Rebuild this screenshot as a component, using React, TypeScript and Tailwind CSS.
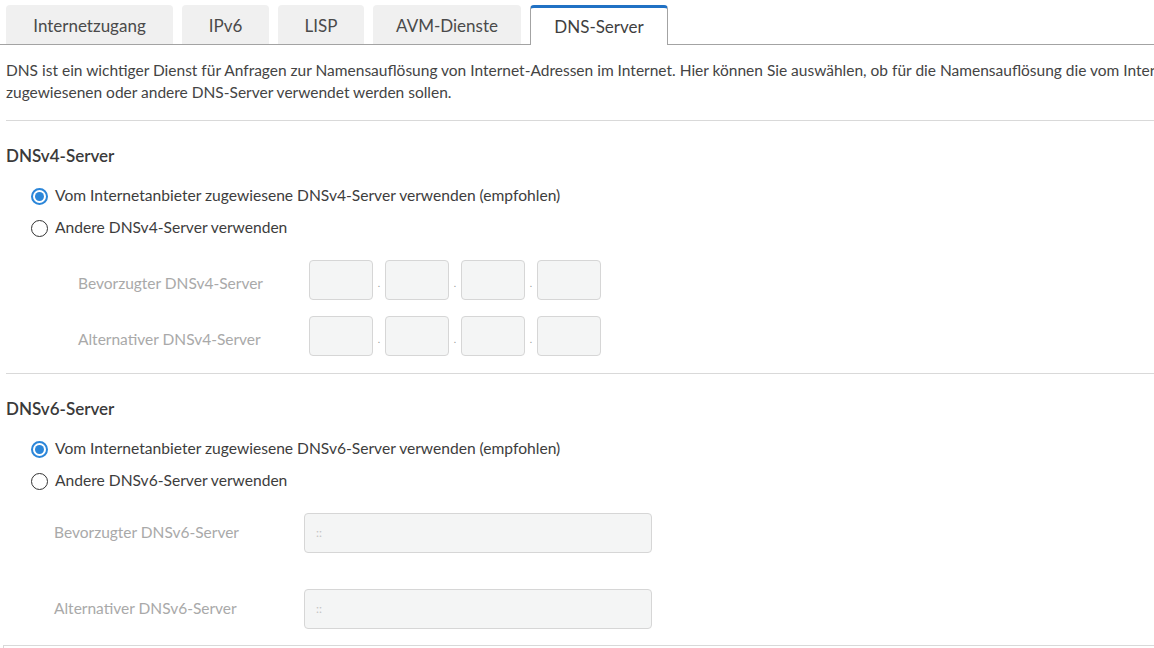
import React from "react"

const font = { fontFamily: "'Source Sans Pro', Lato, 'Liberation Sans', sans-serif" }

const tabs = [
    { label: "Internetzugang", width: "w-[167px]", active: false },
    { label: "IPv6", width: "w-[87px]", active: false },
    { label: "LISP", width: "w-[86px]", active: false },
    { label: "AVM-Dienste", width: "w-[148px]", active: false },
    { label: "DNS-Server", width: "w-[138px]", active: true },
]

function Radio({ checked, label }: { checked: boolean; label: string }) {
    return (
        <label className="flex items-center gap-[7px] h-[32px] pl-[31px]">
            {checked ? (
                <span className="w-[17px] h-[17px] rounded-full border-2 border-[#2b86d9] flex items-center justify-center">
                    <span className="w-[9px] h-[9px] rounded-full bg-[#2b86d9]" />
                </span>
            ) : (
                <span className="w-[17px] h-[17px] rounded-full border-[1.5px] border-[#333]" />
            )}
            <span className="text-[15.6px] text-[#3d3d3d]">{label}</span>
        </label>
    )
}

function Ipv4Row({ label }: { label: string }) {
    return (
        <div className="flex items-center h-[40px]">
            <span className="w-[309px] pl-[78px] pt-[8px] whitespace-nowrap text-[15.5px] text-[#a9a9a9]">{label}</span>
            <div className="flex items-center">
                {[0, 1, 2, 3].map((i) => (
                    <div key={i} className="flex items-center">
                        {i > 0 && <span className="w-[12px] text-center text-[10px] text-[#999] leading-none pt-[6px]">.</span>}
                        <div className="w-[64px] h-[40px] rounded-[4px] border border-[#d6d6d6] bg-[#f4f5f5]" />
                    </div>
                ))}
            </div>
        </div>
    )
}

function Ipv6Row({ label }: { label: string }) {
    return (
        <div className="flex items-center h-[40px]">
            <span className="w-[304px] pl-[54px] whitespace-nowrap text-[15.5px] text-[#a9a9a9]">{label}</span>
            <div className="w-[348px] h-[40px] rounded-[4px] border border-[#d6d6d6] bg-[#f4f5f5] flex items-center pl-[11px] text-[12px] text-[#c4c4c4]">
                ::
            </div>
        </div>
    )
}

export default function App() {
    return (
        <div className="w-full h-[648px] overflow-hidden bg-white" style={font}>
            <div className="w-[1260px]">
                <div className="flex gap-[9px] pl-[6px] pt-[5px] border-b border-[#a3a3a3] h-[45px]">
                    {tabs.map(({ label, width, active }) =>
                        active ? (
                            <div
                                key={label}
                                className={`${width} h-[40px] flex items-center justify-center rounded-t-[4px] bg-white border-x border-[#a3a3a3] border-t-[3px] border-t-[#2071c4] text-[17px] text-[#3f3f3f]`}
                            >
                                {label}
                            </div>
                        ) : (
                            <div
                                key={label}
                                className={`${width} h-[39px] pt-[3px] flex items-center justify-center rounded-t-[4px] bg-[#f0f0f0] text-[17px] text-[#4a4a4a]`}
                            >
                                {label}
                            </div>
                        )
                    )}
                </div>

                <p className="pl-[6px] pt-[14px] text-[15.5px] leading-[22px] text-[#444]">
                    DNS ist ein wichtiger Dienst für Anfragen zur Namensauflösung von Internet-Adressen im Internet. Hier können Sie auswählen, ob für die Namensauflösung die vom Internetanbieter zugewiesenen oder andere DNS-Server verwendet werden sollen.
                </p>

                <div className="ml-[6px] mt-[17px] border-t border-[#d9d9d9]" />
                <h2 className="pl-[6px] pt-[24px] text-[17px] font-semibold text-[#3a3a3a] leading-[22px]">DNSv4-Server</h2>
                <div className="pt-[13px]">
                    <Radio checked label="Vom Internetanbieter zugewiesene DNSv4-Server verwenden (empfohlen)" />
                    <Radio checked={false} label="Andere DNSv4-Server verwenden" />
                </div>
                <div className="pt-[16px] flex flex-col gap-[16px]">
                    <Ipv4Row label="Bevorzugter DNSv4-Server" />
                    <Ipv4Row label="Alternativer DNSv4-Server" />
                </div>

                <div className="ml-[6px] mt-[17px] border-t border-[#d9d9d9]" />
                <h2 className="pl-[6px] pt-[24px] text-[17px] font-semibold text-[#3a3a3a] leading-[22px]">DNSv6-Server</h2>
                <div className="pt-[13px]">
                    <Radio checked label="Vom Internetanbieter zugewiesene DNSv6-Server verwenden (empfohlen)" />
                    <Radio checked={false} label="Andere DNSv6-Server verwenden" />
                </div>
                <div className="pt-[16px] flex flex-col gap-[36px]">
                    <Ipv6Row label="Bevorzugter DNSv6-Server" />
                    <Ipv6Row label="Alternativer DNSv6-Server" />
                </div>
                <div className="ml-[3px] mt-[16px] h-[10px] border-t border-l border-[#d9d9d9]" />
            </div>
        </div>
    )
}
